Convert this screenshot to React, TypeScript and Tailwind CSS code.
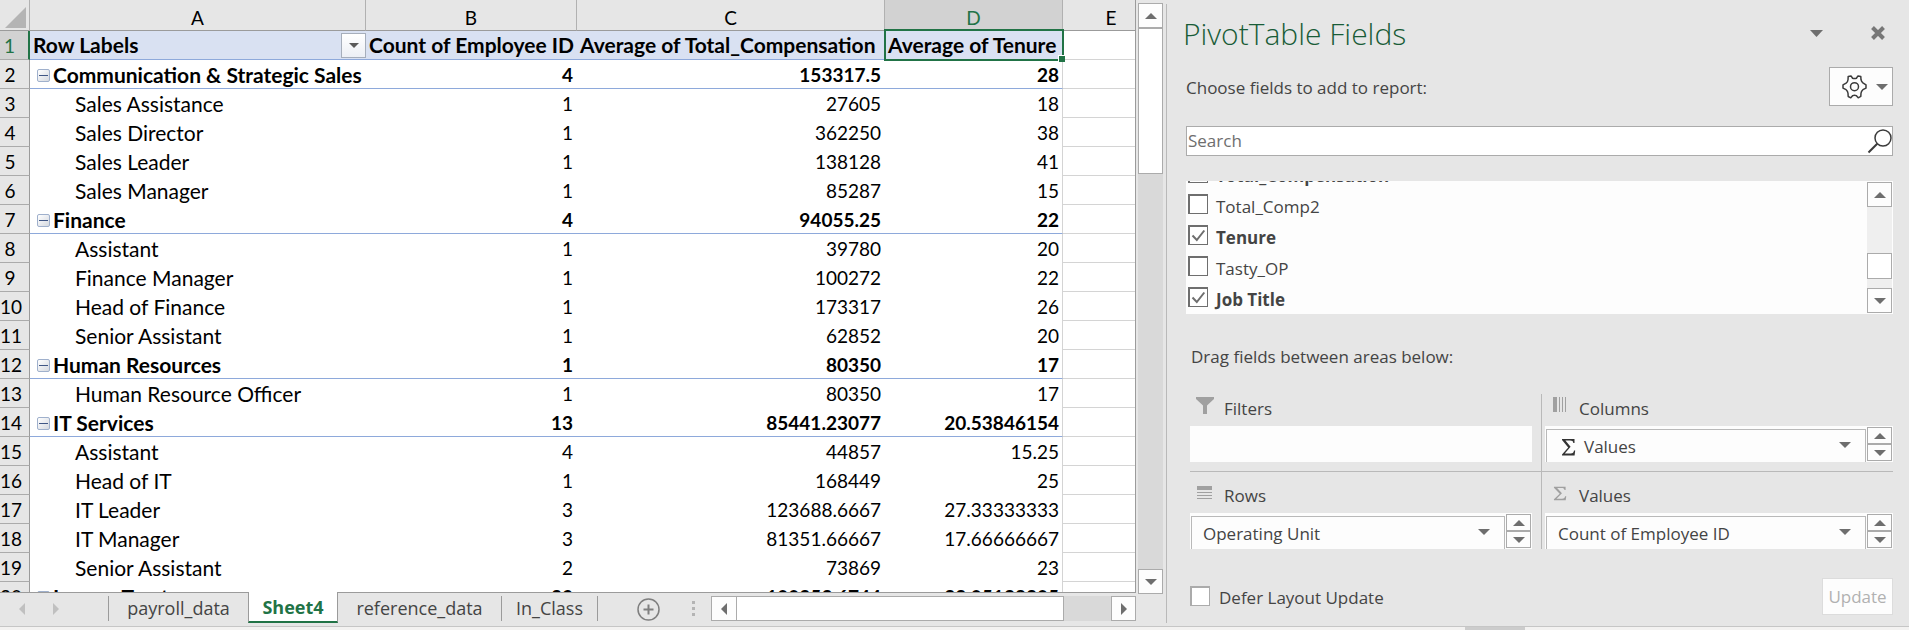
import React from "react";

type Dir = "up" | "down" | "left" | "right";

const TRI: Record<Dir, string> = {
  up: "0,6 12,6 6,0",
  down: "0,0 12,0 6,6",
  left: "6,0 6,12 0,6",
  right: "0,0 0,12 6,6",
};

function Tri({ dir, className = "fill-[#6e6e6e]" }: { dir: Dir; className?: string }) {
  const vertical = dir === "up" || dir === "down";
  return (
    <svg
      aria-hidden="true"
      width={vertical ? 12 : 6}
      height={vertical ? 6 : 12}
      className={`shrink-0 ${className}`}
    >
      <polygon points={TRI[dir]} />
    </svg>
  );
}

function ArrowButton({ dir, label, className = "" }: { dir: Dir; label: string; className?: string }) {
  return (
    <button
      type="button"
      aria-label={label}
      className={`flex shrink-0 items-center justify-center border border-[#ababab] bg-[#fdfdfd] ${className}`}
    >
      <Tri dir={dir} />
    </button>
  );
}

type Row = { group?: boolean; label: string; count: string; comp: string; tenure: string };

const ROWS: Row[] = [
  { group: true, label: "Communication & Strategic Sales", count: "4", comp: "153317.5", tenure: "28" },
  { label: "Sales Assistance", count: "1", comp: "27605", tenure: "18" },
  { label: "Sales Director", count: "1", comp: "362250", tenure: "38" },
  { label: "Sales Leader", count: "1", comp: "138128", tenure: "41" },
  { label: "Sales Manager", count: "1", comp: "85287", tenure: "15" },
  { group: true, label: "Finance", count: "4", comp: "94055.25", tenure: "22" },
  { label: "Assistant", count: "1", comp: "39780", tenure: "20" },
  { label: "Finance Manager", count: "1", comp: "100272", tenure: "22" },
  { label: "Head of Finance", count: "1", comp: "173317", tenure: "26" },
  { label: "Senior Assistant", count: "1", comp: "62852", tenure: "20" },
  { group: true, label: "Human Resources", count: "1", comp: "80350", tenure: "17" },
  { label: "Human Resource Officer", count: "1", comp: "80350", tenure: "17" },
  { group: true, label: "IT Services", count: "13", comp: "85441.23077", tenure: "20.53846154" },
  { label: "Assistant", count: "4", comp: "44857", tenure: "15.25" },
  { label: "Head of IT", count: "1", comp: "168449", tenure: "25" },
  { label: "IT Leader", count: "3", comp: "123688.6667", tenure: "27.33333333" },
  { label: "IT Manager", count: "3", comp: "81351.66667", tenure: "17.66666667" },
  { label: "Senior Assistant", count: "2", comp: "73869", tenure: "23" },
  { group: true, label: "Legacy Trust", count: "39", comp: "100353.6744", tenure: "22.05128205" },
];

function Collapse() {
  return (
    <button
      type="button"
      aria-label="Collapse group"
      className="flex h-[13px] w-[13px] shrink-0 items-center justify-center rounded-[2px] border border-[#9fb0cc] bg-linear-to-br from-white to-[#d5d9e0]"
    >
      <span className="h-px w-[9px] bg-[#3f5685]" />
    </button>
  );
}

function Grid() {
  const colHead = "h-[31px] border-b border-[#9b9b9b] p-0 pt-1.5 text-center font-normal leading-6";
  const sep = "border-r border-r-[#b1b1b1]";
  const rowHead = "h-[29px] border-b border-[#ababab] p-0 pt-0.5 pr-[9px] text-center font-normal leading-[26px]";
  const field = "border-b border-b-[#8ea9db] bg-[#d9e1f2] p-0 pl-[3px] text-left text-[21px] leading-7";
  return (
    <div className="min-h-0 flex-1 overflow-hidden border-r border-b border-[#9b9b9b] bg-white">
      <table className="w-full table-fixed border-separate border-spacing-0 font-['Lato','Liberation_Sans',sans-serif] text-[19px] whitespace-nowrap text-black">
        <colgroup>
          <col className="w-[30px]" />
          <col className="w-[336px]" />
          <col className="w-[211px]" />
          <col className="w-[308px]" />
          <col className="w-[178px]" />
          <col />
        </colgroup>
        <thead>
          <tr className="bg-[#e6e6e6]">
            <th className={`${colHead} ${sep}`}>
              <svg aria-hidden="true" width="22" height="22" className="ml-[5px] fill-[#b4b4b4]">
                <polygon points="21,0 21,21 0,21" />
              </svg>
            </th>
            <th className={`${colHead} ${sep}`}>A</th>
            <th className={`${colHead} ${sep}`}>B</th>
            <th className={`${colHead} ${sep}`}>C</th>
            <th className={`${colHead} ${sep} bg-[#d2d2d2] text-[#217346]`}>D</th>
            <th className={`${colHead} pl-6`}>E</th>
          </tr>
        </thead>
        <tbody>
          <tr>
            <th className={`${rowHead} border-r-2 border-r-[#217346] bg-[#d2d2d2] text-[#217346]`}>1</th>
            <th className={field}>
              <div className="flex items-center justify-between">
                Row Labels
                <button
                  type="button"
                  aria-label="Filter row labels"
                  className="flex h-[25px] w-[25px] items-center justify-center border border-[#a6aebb] bg-linear-to-b from-white to-[#eceff5]"
                >
                  <svg aria-hidden="true" width="10" height="5" className="fill-[#5a5a5a]">
                    <polygon points="0,0 10,0 5,5" />
                  </svg>
                </button>
              </div>
            </th>
            <th className={field}>Count of Employee ID</th>
            <th className={field}>Average of Total_Compensation</th>
            <th className={`${field} relative`}>
              Average of Tenure
              <span className="absolute -inset-x-px -top-0.5 -bottom-0.5 border-2 border-[#217346]" />
              <span className="absolute -right-0.5 -bottom-[3px] h-[7px] w-[7px] border-t border-l border-white bg-[#217346]" />
            </th>
            <td className="border-b border-[#d4d4d4] p-0" />
          </tr>
          {ROWS.map((r, i) => {
            const line = r.group
              ? "border-b border-b-[#8ea9db] pt-0.5 leading-[26px] font-bold"
              : "leading-7";
            const cell = `h-[29px] p-0 ${line}`;
            return (
              <tr key={i}>
                <th className={`${rowHead} border-r border-r-[#9b9b9b] bg-[#e6e6e6]`}>{i + 2}</th>
                <td className={`${cell} text-[21px]`}>
                  {r.group ? (
                    <div className="flex items-center gap-[3px] pl-[7px]">
                      <Collapse />
                      {r.label}
                    </div>
                  ) : (
                    <div className="pl-[45px]">{r.label}</div>
                  )}
                </td>
                <td className={`${cell} pr-1 text-right`}>{r.count}</td>
                <td className={`${cell} pr-1 text-right`}>{r.comp}</td>
                <td className={`${cell} border-r border-r-[#d4d4d4] pr-[3px] text-right`}>{r.tenure}</td>
                <td className="border-b border-[#d4d4d4] p-0" />
              </tr>
            );
          })}
        </tbody>
      </table>
    </div>
  );
}

function SheetBar() {
  const tab = "flex h-[25px] items-center border-r border-[#9b9b9b] pb-0.5 leading-6 text-[#444444]";
  return (
    <div className="flex h-[33px] shrink-0 items-start pt-[3px] font-['Open_Sans','Noto_Sans',sans-serif] text-[18px] whitespace-nowrap">
      <div className="flex h-[25px] w-[109px] shrink-0 items-center gap-7 border-r border-[#9b9b9b] pl-[19px]">
        <button type="button" aria-label="Previous sheet">
          <Tri dir="left" className="fill-[#c0c0c0]" />
        </button>
        <button type="button" aria-label="Next sheet">
          <Tri dir="right" className="fill-[#c0c0c0]" />
        </button>
      </div>
      <button type="button" className="h-[25px] w-[139px] shrink-0 pb-0.5 leading-6 text-[#444444]">
        payroll_data
      </button>
      <button
        type="button"
        className="-mt-1 h-[31px] w-[90px] shrink-0 border-x border-b-2 border-x-[#9b9b9b] border-b-[#217346] bg-white leading-6 font-bold text-[#217346]"
      >
        Sheet4
      </button>
      <button type="button" className={`${tab} w-[164px] shrink-0 justify-center`}>
        reference_data
      </button>
      <button type="button" className={`${tab} w-24 shrink-0 justify-center`}>
        In_Class
      </button>
      <button type="button" aria-label="New sheet" className="ml-[39px] shrink-0 pt-0.5">
        <svg aria-hidden="true" width="23" height="23" fill="none" stroke="#7f7f7f">
          <circle cx="11.5" cy="11.5" r="10.5" strokeWidth="1.5" />
          <path d="M6.5 11.5h10M11.5 6.5v10" strokeWidth="2" />
        </svg>
      </button>
      <div className="mt-[5px] ml-8 flex flex-col gap-[3px]">
        <span className="h-[3px] w-[3px] bg-[#b4b4b4]" />
        <span className="h-[3px] w-[3px] bg-[#b4b4b4]" />
        <span className="h-[3px] w-[3px] bg-[#b4b4b4]" />
      </div>
      <div className="ml-4 flex h-[25px] min-w-0 flex-1 bg-[#d9d9d9]">
        <ArrowButton dir="left" label="Scroll left" className="w-[26px]" />
        <div className="-ml-px w-[328px] border border-[#ababab] bg-white" />
        <ArrowButton dir="right" label="Scroll right" className="ml-auto w-[25px]" />
      </div>
    </div>
  );
}

function Sheet() {
  return (
    <section className="flex min-w-0 flex-1">
      <div className="flex min-w-0 flex-1 flex-col">
        <Grid />
        <SheetBar />
      </div>
      <div className="mt-[3px] mr-[3px] mb-8 ml-0.5 flex w-[25px] shrink-0 flex-col bg-[#d9d9d9]">
        <ArrowButton dir="up" label="Scroll up" className="h-[25px]" />
        <div className="h-[146px] border border-[#ababab] bg-white" />
        <ArrowButton dir="down" label="Scroll down" className="mt-auto h-[25px]" />
      </div>
    </section>
  );
}

function Tick({ id, label, checked }: { id: string; label: string; checked: boolean }) {
  return (
    <div className="flex h-[31px] shrink-0 items-start">
      <span className="relative h-5 w-5">
        <input
          id={id}
          type="checkbox"
          defaultChecked={checked}
          className="peer block h-5 w-5 appearance-none border border-t-2 border-l-2 border-[#6e6e6e] bg-white"
        />
        <svg
          aria-hidden="true"
          viewBox="0 0 20 20"
          className="pointer-events-none absolute inset-0 hidden h-5 w-5 fill-none stroke-[#6e6e6e] stroke-2 peer-checked:block"
        >
          <path d="M4.5 10.5 8.8 15 16.3 5.5" />
        </svg>
      </span>
      <label htmlFor={id} className={`ml-2 pt-[3px] leading-5 ${checked ? "font-bold" : ""}`}>
        {label}
      </label>
    </div>
  );
}

function Spin({ name }: { name: string }) {
  return (
    <div className="flex w-[25px] shrink-0 flex-col pt-px pb-px">
      <ArrowButton dir="up" label={`${name}: previous`} className="h-[17px]" />
      <ArrowButton dir="down" label={`${name}: next`} className="h-[17px]" />
    </div>
  );
}

const SIGMA = "M1 1H13.5V5H12.3C12 3 11.3 2.4 9 2.4H4.4L9.6 8.8 3.8 15.6H9.6C12 15.6 12.6 14.7 13 12.6H14.2L13.6 17.5H1V16.4L7.2 9.6 1 2.1Z";

function Area({ title, icon, item, sigma }: { title: string; icon: React.ReactNode; item?: string; sigma?: boolean }) {
  return (
    <div>
      <div className="flex h-8 items-start pl-1.5">
        <span className="flex w-7 pt-[3px]">{icon}</span>
        <h3 className="pt-[3px] leading-6">{title}</h3>
      </div>
      <div className="flex h-9 gap-px bg-[#fdfdfd] px-px">
        {item && (
          <>
            <button
              type="button"
              className="mt-[3px] flex min-w-0 flex-1 items-center border border-b-0 border-[#b9b9b9] pt-0.5 pr-3.5 pl-[11px] text-left leading-6"
            >
              {sigma && (
                <svg aria-hidden="true" width="15" height="19" className="mr-2 ml-[3px] fill-[#333333]">
                  <path d={SIGMA} />
                </svg>
              )}
              <span className="flex-1">{item}</span>
              <Tri dir="down" className="mb-1 fill-[#6e6e6e]" />
            </button>
            <Spin name={item} />
          </>
        )}
      </div>
    </div>
  );
}

function Pane() {
  return (
    <aside className="mt-1 mb-[3px] flex w-[743px] shrink-0 flex-col border-l border-[#b9b9b9] pr-4 pl-[19px] font-['Open_Sans','Noto_Sans',sans-serif] text-[17px] whitespace-nowrap text-[#444444]">
      <header className="flex h-[63px] items-start">
        <h1 className="-ml-[3px] pt-2.5 text-[30px] leading-10 font-light text-[#185c37]">PivotTable Fields</h1>
        <button type="button" aria-label="Pane options" className="mt-[26px] mr-12 ml-auto">
          <svg aria-hidden="true" width="13" height="7" className="fill-[#6e6e6e]">
            <polygon points="0,0 13,0 6.5,7" />
          </svg>
        </button>
        <button type="button" aria-label="Close" className="mt-[22px] mr-2">
          <svg aria-hidden="true" width="14" height="14" stroke="#777777" strokeWidth="4">
            <path d="M1.5 1.5l11 11M12.5 1.5l-11 11" />
          </svg>
        </button>
      </header>
      <div className="flex h-[59px] items-start justify-between">
        <p className="pt-[9px] leading-6">Choose fields to add to report:</p>
        <button type="button" aria-label="Tools" className="flex h-[39px] w-16 items-center border border-[#ababab] bg-[#fdfdfd] pl-3">
          <svg aria-hidden="true" width="25" height="24" viewBox="0 0 25 24" fill="none" stroke="#3b3b3b" strokeWidth="1.5" strokeLinejoin="round">
            <path d="M6.2 1.4 9 .9 10.6 3.2Q12.5 4 14.4 3.2L16 .9 18.8 1.6 19 4.7Q19.4 6.6 20.9 7.9L24 9.9V13.1L20.9 14.7Q19.2 16.2 19 18.3L18.8 21.4 16.2 22.8 14.2 20.6Q12.5 19.8 10.8 20.6L8.8 22.8 6.2 21.5 6 18.3Q5.8 16.2 4.1 14.7L1 13.1V9.9L4.1 8.2Q5.8 6.8 6 4.7Z" />
            <circle cx="12.5" cy="11.7" r="4" />
          </svg>
          <Tri dir="down" className="ml-[9px] fill-[#6e6e6e]" />
        </button>
      </div>
      <div className="flex h-[30px] shrink-0 border border-[#ababab] bg-white">
        <input
          type="text"
          aria-label="Search fields"
          placeholder="Search"
          className="min-w-0 flex-1 pl-px leading-7 outline-none placeholder:text-[#6e6e6e]"
        />
        <button type="button" aria-label="Search">
          <svg aria-hidden="true" width="25" height="26" fill="none" stroke="#3b3b3b" strokeWidth="1.5">
            <circle cx="16" cy="10" r="8" />
            <path d="M10.2 15.8 1.5 24.5" strokeWidth="2" />
          </svg>
        </button>
      </div>
      <div className="mt-[25px] flex h-[133px] shrink-0 overflow-hidden bg-[#fdfdfd] pl-0.5">
        <div className="flex flex-1 flex-col justify-end overflow-hidden">
          <Tick id="f-total" label="Total_Compensation" checked />
          <Tick id="f-comp2" label="Total_Comp2" checked={false} />
          <Tick id="f-tenure" label="Tenure" checked />
          <Tick id="f-tasty" label="Tasty_OP" checked={false} />
          <Tick id="f-job" label="Job Title" checked />
          <div className="-mt-1" />
        </div>
        <div className="my-px mr-px flex w-[25px] flex-col bg-[#efefef]">
          <ArrowButton dir="up" label="Scroll fields up" className="h-[25px]" />
          <div className="mt-auto mb-[9px] h-[26px] border border-[#ababab] bg-white" />
          <ArrowButton dir="down" label="Scroll fields down" className="h-[25px]" />
        </div>
      </div>
      <h2 className="mt-[31px] pl-[5px] leading-6">Drag fields between areas below:</h2>
      <div className="mt-[25px] ml-1 grid grid-cols-[352px_1fr]">
        <div className="border-r border-b border-[#b9b9b9] pr-[9px] pb-[9px]">
          <Area
            title="Filters"
            icon={
              <svg aria-hidden="true" width="18" height="17" className="fill-[#a0a0a0]">
                <path d="M0 0H18V2L11 8.5V17H7V8.5L0 2Z" />
              </svg>
            }
          />
        </div>
        <div className="border-b border-[#b9b9b9] pb-[9px] pl-[3px]">
          <Area
            title="Columns"
            item="Values"
            sigma
            icon={
              <svg aria-hidden="true" width="14" height="15" className="ml-0.5 fill-[#a0a0a0]">
                <path d="M0 0h4v15H0zM6 0h1v15H6zM9 0h1v15H9zM12 0h1v15h-1z" />
              </svg>
            }
          />
        </div>
        <div className="border-r border-[#b9b9b9] pt-[9px] pr-[9px]">
          <Area
            title="Rows"
            item="Operating Unit"
            icon={
              <svg aria-hidden="true" width="15" height="14" className="mt-0.5 ml-px fill-[#a0a0a0]">
                <path d="M0 0h15v4H0zM0 6h15v1H0zM0 9h15v1H0zM0 12h15v1H0z" />
              </svg>
            }
          />
        </div>
        <div className="pt-[9px] pl-[3px]">
          <Area
            title="Values"
            item="Count of Employee ID"
            icon={
              <svg aria-hidden="true" width="14" height="15" viewBox="0 0 15 18.5" preserveAspectRatio="none" className="mt-0.5 ml-0.5 fill-[#a0a0a0]">
                <path d={SIGMA} />
              </svg>
            }
          />
        </div>
      </div>
      <footer className="mt-[29px] ml-1 flex items-start justify-between">
        <div className="flex items-start pt-2">
          <input
            id="defer"
            type="checkbox"
            className="h-5 w-5 appearance-none border border-t-2 border-l-2 border-[#ababab] bg-white"
          />
          <label htmlFor="defer" className="pl-[9px] leading-6">
            Defer Layout Update
          </label>
        </div>
        <button type="button" disabled className="h-[37px] w-[71px] border border-[#dcdcdc] bg-[#fdfdfd] text-[#b1b1b1]">
          Update
        </button>
      </footer>
    </aside>
  );
}

export default function App() {
  return (
    <div className="flex h-screen flex-col overflow-hidden bg-[#e6e6e6]">
      <main className="flex min-h-0 flex-1">
        <Sheet />
        <Pane />
      </main>
      <div className="flex h-1 shrink-0 justify-end border-t border-[#c6c6c6] bg-[#f3f2f1] pr-96">
        <span className="w-[60px] bg-[#cccccc]" />
      </div>
    </div>
  );
}
